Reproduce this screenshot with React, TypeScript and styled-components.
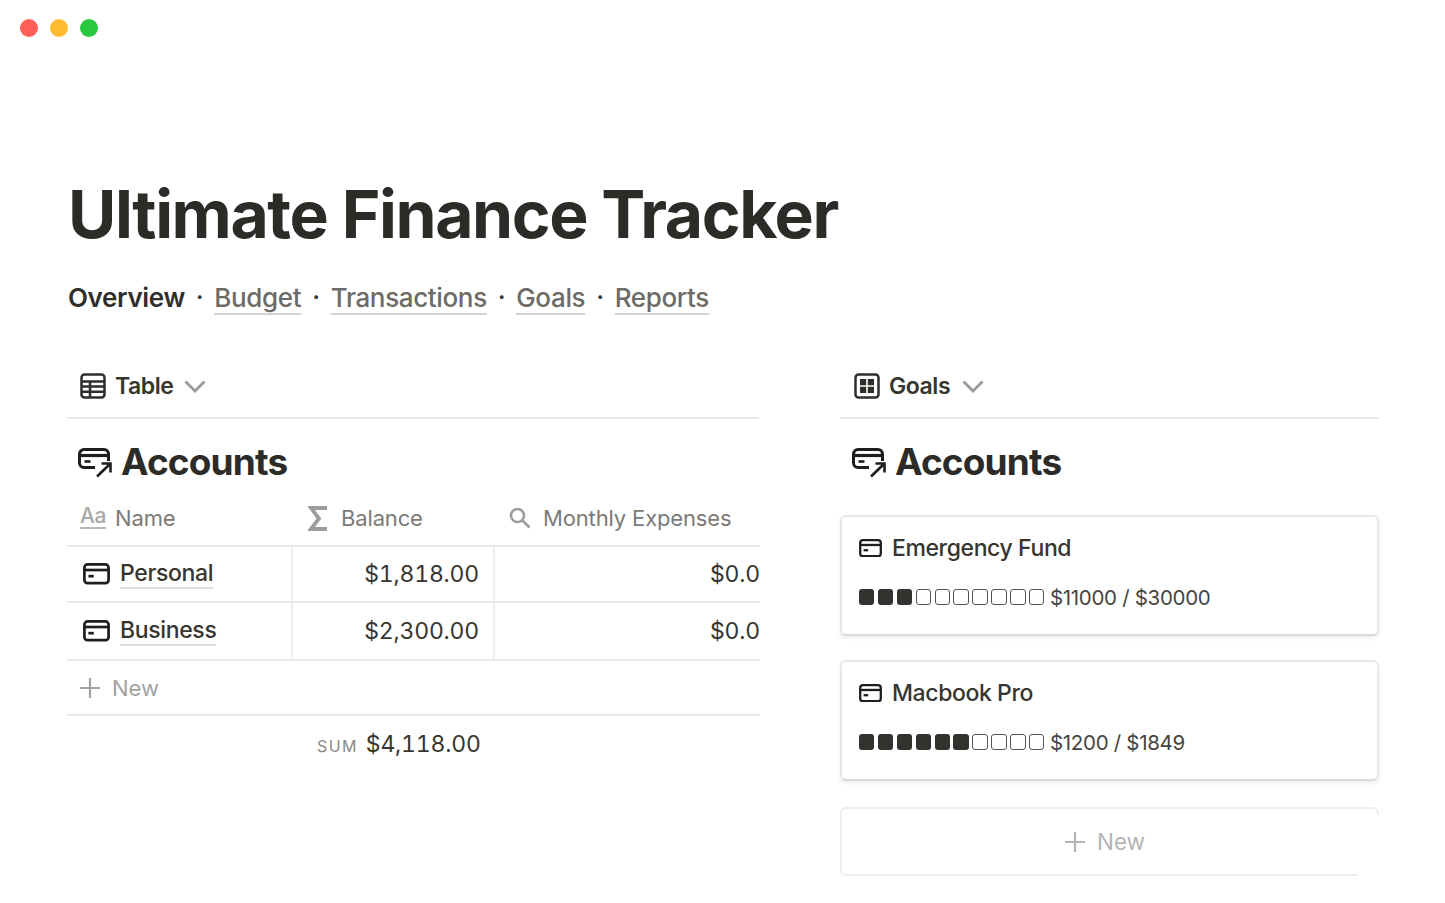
import React from 'react'
import styled, { createGlobalStyle } from 'styled-components'

const GlobalStyle = createGlobalStyle`
html, body {
    margin: 0;
    padding: 0;
    background: #ffffff;
}
body {
    font-family: Inter, "Liberation Sans", sans-serif;
    color: #2f2e2b;
    -webkit-font-smoothing: antialiased;
}
`

const Page = styled.div`
width: 1445px;
height: 903px;
overflow: hidden;
display: flex;
flex-flow: column nowrap;
`

const WindowBar = styled.div`
display: flex;
gap: 12.3px;
padding: 19px 0 0 19.5px;
height: 18px;
`

const Light = styled.div<{ $color: string }>`
width: 18px;
height: 18px;
border-radius: 50%;
background-color: ${p => p.$color};
`

const Content = styled.div`
padding: 141px 0 0 67px;
display: flex;
flex-flow: column nowrap;
`

const Title = styled.h1`
margin: 0 0 0 1px;
font-size: 66px;
line-height: 72px;
font-weight: 700;
letter-spacing: -1.4px;
color: #2c2b28;
white-space: nowrap;
`

const Nav = styled.div`
margin: 29px 0 0 1px;
display: flex;
align-items: center;
height: 36px;
font-size: 26px;
letter-spacing: -0.36px;
`

const NavCurrent = styled.span`
font-weight: 600;
color: #2f2e2b;
`

const NavDot = styled.span`
width: 29.5px;
text-align: center;
font-weight: 700;
font-size: 22px;
color: #3a3936;
`

const NavLink = styled.span`
font-weight: 500;
color: #6c6b68;
border-bottom: 2px solid #d3d3d1;
line-height: 31px;
height: 31px;
margin-top: 3px;
`

const Columns = styled.div`
margin-top: 39px;
display: flex;
align-items: flex-start;
gap: 80px;
`

const LeftColumn = styled.div`
width: 693px;
flex: none;
`

const RightColumn = styled.div`
width: 539px;
flex: none;
`

const ViewBar = styled.div<{ $pad: number }>`
height: 65px;
display: flex;
align-items: center;
padding: 0 0 0 ${p => p.$pad}px;
border-bottom: 2px solid #e9e9e7;
box-sizing: border-box;
margin-right: ${p => (p.$pad === 13 ? 1 : 0)}px;
font-size: 23px;
font-weight: 600;
letter-spacing: -0.45px;
color: #37352f;
`

const ViewLabel = styled.span`
margin-left: 9px;
`

const Caret = styled.svg<{ $gap: number }>`
margin-left: ${p => p.$gap}px;
width: 22px;
height: 14px;
`

const Heading = styled.div<{ $pad: number }>`
height: 84px;
padding: 0 0 2px ${p => p.$pad}px;
display: flex;
align-items: center;
font-size: 37px;
font-weight: 700;
letter-spacing: -0.85px;
color: #2c2b28;
`

const HeadingIcon = styled.svg`
width: 34px;
height: 30px;
flex: none;
margin-top: 3px;
`

const HeadingText = styled.span`
margin-left: 9px;
`

const TableGrid = styled.div`
display: flex;
flex-flow: column nowrap;
`

const HeadRow = styled.div`
display: grid;
grid-template-columns: 226px 202px 265px;
height: 26px;
padding-bottom: 14px;
border-bottom: 2px solid #e9e9e7;
font-size: 22px;
letter-spacing: -0.15px;
color: #7b7a77;
`

const HeadCell = styled.div<{ $pad: number }>`
display: flex;
align-items: center;
padding-left: ${p => p.$pad}px;
white-space: nowrap;
`

const HeadLabel = styled.span<{ $gap: number }>`
margin-left: ${p => p.$gap}px;
`

const AaIcon = styled.span`
width: 26px;
flex: none;
font-size: 21px;
font-weight: 500;
line-height: 22px;
letter-spacing: -0.5px;
color: #a8a7a5;
border-bottom: 2px solid #b9b8b6;
text-align: center;
margin-top: -3px;
`

const BodyRow = styled.div<{ $height: number }>`
display: grid;
grid-template-columns: 226px 202px 265px;
height: ${p => p.$height}px;
border-bottom: 2px solid #e9e9e7;
`

const NameCell = styled.div`
display: flex;
align-items: center;
padding-left: 16px;
border-right: 2px solid #eeeeec;
`

const NameLink = styled.span`
margin-left: 10px;
font-size: 23px;
font-weight: 500;
letter-spacing: -0.35px;
color: #37352f;
line-height: 28px;
border-bottom: 2px solid #dededc;
`

const NumCell = styled.div<{ $divider?: boolean }>`
display: flex;
align-items: center;
justify-content: flex-end;
padding-right: ${p => (p.$divider ? 14 : 0)}px;
font-variant-numeric: tabular-nums;
letter-spacing: -0.2px;
border-right: ${p => (p.$divider ? '2px solid #eeeeec' : 'none')};
color: #37352f;
font-size: 23px;
overflow: hidden;
white-space: nowrap;
`

const NewRow = styled.div`
height: 53px;
display: flex;
align-items: center;
padding-left: 12px;
border-bottom: 2px solid #e9e9e7;
font-size: 22px;
color: #a3a2a0;
`

const NewLabel = styled.span`
margin-left: 11px;
`

const SumRow = styled.div`
display: flex;
align-items: baseline;
height: 56px;
padding: 14px 0 0 250px;
box-sizing: border-box;
`

const SumTag = styled.span`
font-size: 16px;
letter-spacing: 1.4px;
color: #8a8987;
`

const SumValue = styled.span`
margin-left: 8px;
font-size: 23px;
letter-spacing: -0.2px;
font-variant-numeric: tabular-nums;
color: #37352f;
`

const CardList = styled.div`
display: flex;
flex-flow: column nowrap;
gap: 24px;
margin-top: 10px;
`

const Card = styled.div`
height: 121px;
box-sizing: border-box;
border: 2px solid #e8e8e6;
border-bottom-color: #d9d9d7;
border-radius: 6px;
box-shadow: 0 2px 4px rgba(15, 15, 15, 0.08);
padding: 15px 0 0 17px;
background: #ffffff;
`

const CardTitle = styled.div`
display: flex;
align-items: center;
height: 32px;
font-size: 23px;
font-weight: 500;
letter-spacing: -0.4px;
color: #37352f;
`

const CardTitleText = styled.span`
margin-left: 10px;
`

const ProgressLine = styled.div`
margin-top: 17px;
display: flex;
align-items: center;
height: 32px;
font-size: 20.5px;
letter-spacing: -0.3px;
color: #454441;
`

const Squares = styled.div`
display: flex;
gap: 3.5px;
margin-right: 5.5px;
`

const Square = styled.div<{ $filled: boolean }>`
width: 15.4px;
height: 15.4px;
box-sizing: border-box;
border-radius: 3px;
border: ${p => (p.$filled ? 'none' : '1.5px solid #55544f')};
background-color: ${p => (p.$filled ? '#33322e' : '#ffffff')};
`

const NewCard = styled.div`
position: relative;
margin-top: 26px;
height: 69px;
box-sizing: border-box;
border: 2px solid #eeeeec;
border-radius: 6px;
display: flex;
align-items: center;
justify-content: center;
padding-right: 10px;
font-size: 22.5px;
color: #b5b4b2;
&::after {
    content: '';
    position: absolute;
    right: -4px;
    top: 6px;
    bottom: -4px;
    width: 23px;
    background: #ffffff;
}
`

const TableIcon = () => (
    <svg width="26" height="26" viewBox="0 0 26 26" fill="none" stroke="#2f2e2b" strokeWidth="2.5">
        <rect x="1.5" y="1.5" width="23" height="23" rx="3" />
        <path d="M1.5 8.5h23M1.5 13.5h23M1.5 18.8h23M10 8.5V24" />
    </svg>
)

const GalleryIcon = () => (
    <svg width="26" height="26" viewBox="0 0 26 26" fill="none">
        <rect x="1.5" y="1.5" width="23" height="23" rx="3" stroke="#2f2e2b" strokeWidth="2.5" />
        <path d="M6 6h6.2v6.2H6zM13.8 6H20v6.2h-6.2zM6 13.8h6.2V20H6zM13.8 13.8H20V20h-6.2z" fill="#2f2e2b" />
    </svg>
)

const CaretIcon = ({ gap }: { gap: number }) => (
    <Caret $gap={gap} viewBox="0 0 22 14" fill="none" stroke="#9b9a97" strokeWidth="2.8">
        <path d="M1.5 2.5 11 12l9.5-9.5" />
    </Caret>
)

const CardArrowIcon = () => (
    <HeadingIcon viewBox="0 0 34 30" fill="none" stroke="#1f1e1c" strokeWidth="3">
        <path d="M17 19.5H6a4.5 4.5 0 0 1-4.5-4.5V6A4.5 4.5 0 0 1 6 1.5h20A4.5 4.5 0 0 1 30.5 6v7" />
        <path d="M1.5 7.5h29" strokeWidth="3.2" />
        <path d="M6.5 13.5h6" strokeWidth="2.6" />
        <path d="M19 28.5 32 16M23.5 15.5H32.5V24.5" strokeWidth="2.6" />
    </HeadingIcon>
)

const CardIcon = ({ size }: { size: number }) => (
    <svg width={size} height={size * 0.8} viewBox="0 0 25 20" fill="none" stroke="#1f1e1c" strokeWidth="2.5">
        <rect x="1.3" y="1.3" width="22.4" height="17.4" rx="3" />
        <path d="M1.3 6.5h22.4" />
        <path d="M5 12.2h5" />
    </svg>
)

const SigmaIcon = () => (
    <svg width="20" height="25" viewBox="0 0 20 25" fill="none" stroke="#9e9d9b" strokeWidth="3.8">
        <path d="M19 2H3l8 10.5L3 23h16" />
    </svg>
)

const SearchIcon = () => (
    <svg width="24" height="24" viewBox="0 0 24 24" fill="none" stroke="#9e9d9b" strokeWidth="2.6">
        <circle cx="9.5" cy="9.5" r="6.5" />
        <path d="m14.5 14.5 7 7" />
    </svg>
)

const PlusIcon = ({ color }: { color: string }) => (
    <svg width="22" height="22" viewBox="0 0 22 22" fill="none" stroke={color} strokeWidth="2.2">
        <path d="M11 1v20M1 11h20" />
    </svg>
)

const navLinks = ['Budget', 'Transactions', 'Goals', 'Reports']

const accounts = [
    { name: 'Personal', balance: '$1,818.00', height: 54 },
    { name: 'Business', balance: '$2,300.00', height: 56 }
]

const goals = [
    { name: 'Emergency Fund', filled: 3, amount: '$11000 / $30000' },
    { name: 'Macbook Pro', filled: 6, amount: '$1200 / $1849' }
]

export default function App() {
    return (
        <Page>
            <GlobalStyle />
            <WindowBar>
                <Light $color="#ff5f57" />
                <Light $color="#febc2e" />
                <Light $color="#28c840" />
            </WindowBar>
            <Content>
                <Title>Ultimate Finance Tracker</Title>
                <Nav>
                    <NavCurrent>Overview</NavCurrent>
                    {navLinks.map(link => (
                        <React.Fragment key={link}>
                            <NavDot>·</NavDot>
                            <NavLink>{link}</NavLink>
                        </React.Fragment>
                    ))}
                </Nav>
                <Columns>
                    <LeftColumn>
                        <ViewBar $pad={13}>
                            <TableIcon />
                            <ViewLabel>Table</ViewLabel>
                            <CaretIcon gap={11} />
                        </ViewBar>
                        <Heading $pad={11}>
                            <CardArrowIcon />
                            <HeadingText>Accounts</HeadingText>
                        </Heading>
                        <TableGrid>
                            <HeadRow>
                                <HeadCell $pad={13}>
                                    <AaIcon>Aa</AaIcon>
                                    <HeadLabel $gap={9}>Name</HeadLabel>
                                </HeadCell>
                                <HeadCell $pad={15}>
                                    <SigmaIcon />
                                    <HeadLabel $gap={13}>Balance</HeadLabel>
                                </HeadCell>
                                <HeadCell $pad={13}>
                                    <SearchIcon />
                                    <HeadLabel $gap={11}>Monthly Expenses</HeadLabel>
                                </HeadCell>
                            </HeadRow>
                            {accounts.map(account => (
                                <BodyRow key={account.name} $height={account.height}>
                                    <NameCell>
                                        <CardIcon size={27} />
                                        <NameLink>{account.name}</NameLink>
                                    </NameCell>
                                    <NumCell $divider>{account.balance}</NumCell>
                                    <NumCell>$0.0</NumCell>
                                </BodyRow>
                            ))}
                            <NewRow>
                                <PlusIcon color="#a3a2a0" />
                                <NewLabel>New</NewLabel>
                            </NewRow>
                            <SumRow>
                                <SumTag>SUM</SumTag>
                                <SumValue>$4,118.00</SumValue>
                            </SumRow>
                        </TableGrid>
                    </LeftColumn>
                    <RightColumn>
                        <ViewBar $pad={14}>
                            <GalleryIcon />
                            <ViewLabel>Goals</ViewLabel>
                            <CaretIcon gap={12} />
                        </ViewBar>
                        <Heading $pad={12}>
                            <CardArrowIcon />
                            <HeadingText>Accounts</HeadingText>
                        </Heading>
                        <CardList>
                            {goals.map(goal => (
                                <Card key={goal.name}>
                                    <CardTitle>
                                        <CardIcon size={23} />
                                        <CardTitleText>{goal.name}</CardTitleText>
                                    </CardTitle>
                                    <ProgressLine>
                                        <Squares>
                                            {Array.from({ length: 10 }, (_, i) => (
                                                <Square key={i} $filled={i < goal.filled} />
                                            ))}
                                        </Squares>
                                        {goal.amount}
                                    </ProgressLine>
                                </Card>
                            ))}
                        </CardList>
                        <NewCard>
                            <PlusIcon color="#b5b4b2" />
                            <NewLabel>New</NewLabel>
                        </NewCard>
                    </RightColumn>
                </Columns>
            </Content>
        </Page>
    )
}
